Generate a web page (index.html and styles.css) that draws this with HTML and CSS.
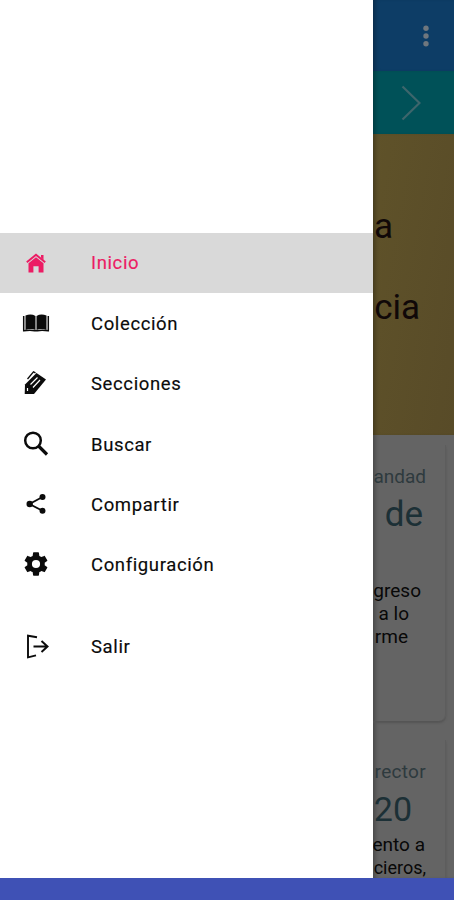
FILE: index.html
```html
<!DOCTYPE html>
<html lang="es">
<head>
<meta charset="utf-8">
<title>Inicio</title>
<link rel="stylesheet" href="styles.css">
</head>
<body>
<div class="screen">
  <nav class="drawer">
    <a class="item active"><svg class="icon" viewBox="0 0 30 30"><path d="M5.800 14.200 15 6.800l9.200 7.400" fill="none" stroke="currentColor" stroke-width="2"/><path d="M20 7h2.500v5L20 9.500zM7.500 15.200 15 9.200l7.500 6v9.300h-4.900v-6.300h-5.200v6.300h-4.900z" fill="currentColor"/></svg><span>Inicio</span></a>
    <a class="item"><svg class="icon" viewBox="0 0 30 30"><path d="M4.500 7.500Q10 5.500 14.500 7.900V22Q10 20 4.500 22zM15.500 7.900Q20 5.500 25.500 7.500V22Q20 20 15.500 22z" fill="currentColor"/><path d="M2.700 8v14.700q7-1 11 0h2.600q4-1 11 0V8" fill="none" stroke="currentColor" stroke-width="1.500"/></svg><span>Colección</span></a>
    <a class="item"><svg class="icon" viewBox="0 0 30 30"><path d="M4 16.500 15.500 5l9.500 6.500L13 26H3.700z" fill="currentColor"/><path d="m9.500 16.500 7-7M12 19.500l7-7.500M6.500 20v3" stroke="#fff" stroke-width="1.200" fill="none"/><path d="m6.500 11 6-7.200 2 1" stroke="currentColor" stroke-width="1.300" fill="none"/></svg><span>Secciones</span></a>
    <a class="item"><svg class="icon" viewBox="0 0 30 30"><circle cx="12" cy="11.500" r="7.800" fill="none" stroke="currentColor" stroke-width="2.500"/><path d="m17.500 17 8.500 8.500" stroke="currentColor" stroke-width="3.200"/></svg><span>Buscar</span></a>
    <a class="item"><svg class="icon" viewBox="0 0 30 30"><path d="M21.500 8 8.500 15l13 6.800" fill="none" stroke="currentColor" stroke-width="1.800"/><g fill="currentColor"><circle cx="21.500" cy="8" r="3"/><circle cx="8.700" cy="15" r="3.200"/><circle cx="21.500" cy="21.800" r="3"/></g></svg><span>Compartir</span></a>
    <a class="item"><svg class="icon gear" viewBox="0 0 24 24"><path fill="currentColor" d="M19.430 12.980c.04-.32.07-.64.07-.98s-.03-.66-.07-.98l2.110-1.650c.19-.15.24-.42.12-.64l-2-3.460c-.12-.22-.39-.3-.61-.22l-2.490 1c-.52-.4-1.080-.73-1.690-.98l-.38-2.650C14.460 2.180 14.250 2 14 2h-4c-.25 0-.46.18-.49.42l-.38 2.650c-.61.25-1.170.59-1.690.98l-2.490-1c-.23-.09-.49 0-.61.22l-2 3.460c-.13.22-.07.49.12.64l2.110 1.650c-.04.32-.07.65-.07.98s.03.66.07.98l-2.110 1.650c-.19.15-.24.42-.12.64l2 3.460c.12.22.39.3.61.22l2.490-1c.52.4 1.080.73 1.690.98l.38 2.650c.03.24.24.42.49.42h4c.25 0 .46-.18.49-.42l.38-2.650c.61-.25 1.170-.59 1.690-.98l2.490 1c.23.09.49 0 .61-.22l2-3.460c.12-.22.07-.49-.12-.64zM12 15.500A3.500 3.500 0 1 1 12 8.500a3.500 3.500 0 0 1 0 7z"/></svg><span>Configuración</span></a>
    <a class="item exit"><svg class="icon" viewBox="0 0 30 30"><path d="M16 6.300 7 4.700v21.600l8-2" fill="none" stroke="currentColor" stroke-width="1.900"/><path d="M12.500 15.500h14M20.500 10l6 5.500-6 5.500" fill="none" stroke="currentColor" stroke-width="2"/></svg><span>Salir</span></a>
  </nav>
  <main class="page">
    <header class="toolbar"><svg class="dots" viewBox="0 0 6 22"><circle cx="3" cy="3.200" r="2.700"/><circle cx="3" cy="11" r="2.700"/><circle cx="3" cy="18.800" r="2.700"/></svg></header>
    <div class="tabs"><svg class="chevron" viewBox="0 0 20 36"><path d="m1.500 1.500 17 16.500-17 16.500"/></svg></div>
    <section class="banner"><p class="first">a</p><p>cia</p></section>
    <section class="cards">
      <article class="card">
        <p class="author">andad</p>
        <h2>de</h2>
        <p class="body"><span class="l1">greso</span><span class="l2">a lo</span><span class="l3">rme</span></p>
      </article>
      <article class="card second">
        <p class="author">rector</p>
        <h2>20</h2>
        <p class="body"><span class="l4">ento a</span><span class="l5">cieros,</span></p>
      </article>
    </section>
  </main>
</div>
<footer class="navbar"></footer>
</body>
</html>
```
FILE: styles.css
```css
* { box-sizing: border-box; }
body {
  margin: 0;
  height: 900px;
  overflow: hidden;
  font-family: Roboto, sans-serif;
  background: #fff;
}
p, h2 { margin: 0; font-weight: 400; white-space: nowrap; }
.screen { display: flex; height: 878px; overflow: hidden; }
.drawer {
  width: 373px;
  flex: none;
  padding-top: 232.500px;
  background: #fff;
}
.item {
  display: flex;
  align-items: center;
  height: 60px;
  margin-bottom: .4px;
  padding-left: 20.500px;
  color: #0b0b0b;
  font-size: 18.500px;
  font-weight: 400;
  letter-spacing: .62px;
  -webkit-text-stroke: .15px currentColor;
}
.item span { margin-left: 40.500px; padding-top: 2px; }
.active { background: #d9d9d9; color: #ec1c64; }
.active span { padding-top: 1px; }
.exit { margin-top: 21.500px; }
.icon { width: 30px; height: 30px; flex: none; }
.gear { padding: 1px; }
.page {
  flex: 1;
  min-width: 0;
  overflow: hidden;
  display: flex;
  flex-direction: column;
  background: #646464;
  box-shadow: inset 5px 0 5px -3px rgba(0, 0, 0, .3);
}
.toolbar, .tabs {
  display: flex;
  align-items: center;
  justify-content: flex-end;
  flex: none;
}
.toolbar { height: 71px; padding-right: 25px; background: #0d3d66; box-shadow: inset 5px 0 5px -3px rgba(0, 0, 0, .3); }
.dots { width: 6px; height: 22px; fill: #6f777e; }
.tabs { height: 63px; padding-right: 33px; background: #005158; box-shadow: inset 5px 0 5px -3px rgba(0, 0, 0, .3); }
.chevron { width: 20px; height: 36px; fill: none; stroke: #3d666c; stroke-width: 2.200; }
.banner {
  flex: none;
  height: 300.500px;
  padding: 73px 34px 0 0;
  background: linear-gradient(100deg, #5f5229, #584b28);
  color: #100808;
  font-size: 35px;
  line-height: 40px;
  text-align: right;
  box-shadow: inset 5px 0 5px -3px rgba(0, 0, 0, .3);
}
.banner .first { margin: 0 27px 41px 0; }
.cards { flex: 1; min-height: 0; overflow: hidden; padding-top: 10px; }
.card {
  height: 276px;
  margin-right: 8px;
  padding-top: 20px;
  border-right: 1px solid #5d5d5d;
  border-radius: 0 0 7px 0;
  box-shadow: 0 2px 2px #555;
}
.second { margin-top: 19px; }
.author, h2, .body { display: flex; justify-content: flex-end; }
.author { padding-right: 19px; color: #2e3a3e; font-size: 19px; line-height: 24px; }
h2 { padding-right: 22px; color: #1c3036; font-size: 35px; line-height: 51px; }
.body {
  flex-direction: column;
  align-items: flex-end;
  margin-top: 39px;
  color: #080808;
  font-size: 19px;
  line-height: 23px;
}
.l1 { margin-right: 24px; }
.l2 { margin-right: 36px; }
.l3 { margin-right: 37px; }
.second .author { letter-spacing: .3px; }
.second h2 { padding-right: 33px; font-size: 34px; }
.second .body { margin-top: -2px; }
.l4 { margin-right: 20px; }
.l5 { margin-right: 19px; font-size: 18px; }
.navbar { height: 22px; background: #3f51b5; }
```
